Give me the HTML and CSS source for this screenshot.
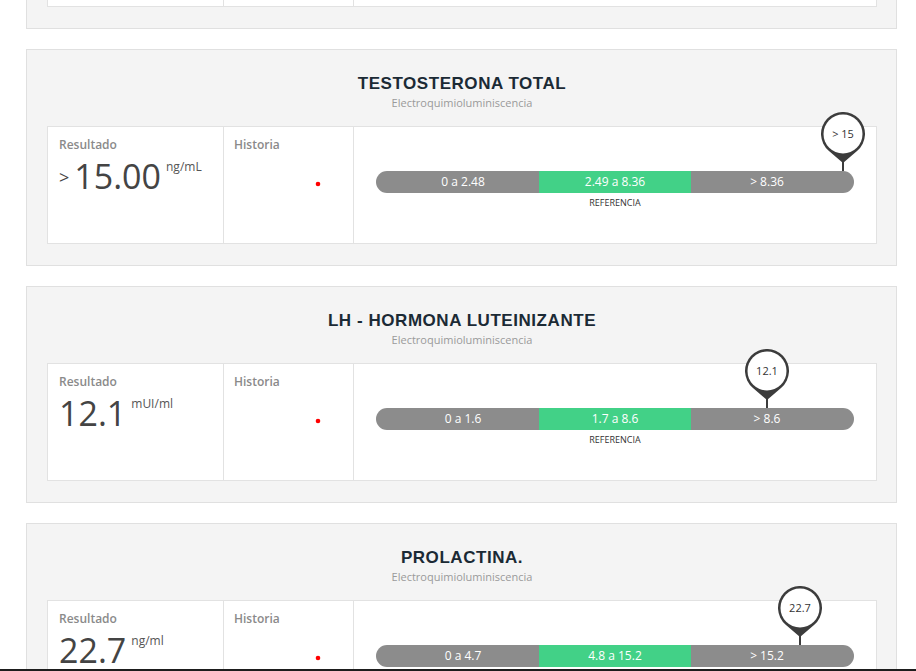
FILE: index.html
```html
<!DOCTYPE html>
<html lang="es">
<head>
    <meta charset="UTF-8">
    <meta name="viewport" content="width=device-width, initial-scale=1.0">
    <title>Resultados de laboratorio</title>
    <link rel="stylesheet" href="styles.css">
</head>
<body>
    <div class="results">

        <!-- FSH -->
        <section class="exam">
            <h2 class="exam-title">FSH - HORMONA FOLICULO ESTIMULANTE</h2>
            <p class="exam-method">Electroquimioluminiscencia</p>
            <div class="exam-table">
                <div class="cell cell-result">
                    <span class="label">Resultado</span>
                    <div class="value"><span class="number">6.3</span><span class="unit">mUI/ml</span></div>
                </div>
                <div class="cell cell-history">
                    <span class="label">Historia</span>
                </div>
                <div class="cell cell-scale"></div>
            </div>
        </section>

        <!-- Testosterona -->
        <section class="exam">
            <h2 class="exam-title">TESTOSTERONA TOTAL</h2>
            <p class="exam-method">Electroquimioluminiscencia</p>
            <div class="exam-table">
                <div class="cell cell-result">
                    <span class="label">Resultado</span>
                    <div class="value"><span class="sign">&gt;</span><span class="number">15.00</span><span class="unit">ng/mL</span></div>
                </div>
                <div class="cell cell-history">
                    <span class="label">Historia</span>
                    <svg class="history-chart" width="108" height="64" viewBox="0 0 108 64">
                        <circle cx="84" cy="32" r="2.3" fill="#ff0000"/>
                    </svg>
                </div>
                <div class="cell cell-scale">
                    <div class="scale">
                        <div class="pin" style="left: 97.7%">
                            <svg width="44" height="59" viewBox="0 0 44 59">
                                <path d="M22 51 L7.7 38.7 A22 22 0 1 1 36.3 38.7 Z" fill="#3c3c3c"/>
                                <circle cx="22" cy="22" r="19.5" fill="#fff"/>
                                <rect x="21" y="50" width="2" height="9" fill="#3c3c3c"/>
                            </svg>
                            <span class="pin-value">&gt; 15</span>
                        </div>
                        <div class="scale-bar">
                            <span class="range">0 a 2.48</span>
                            <span class="range range-ok">2.49 a 8.36</span>
                            <span class="range">&gt; 8.36</span>
                        </div>
                    </div>
                    <div class="scale-caption"><span></span><span>REFERENCIA</span><span></span></div>
                </div>
            </div>
        </section>

        <!-- LH -->
        <section class="exam">
            <h2 class="exam-title">LH - HORMONA LUTEINIZANTE</h2>
            <p class="exam-method">Electroquimioluminiscencia</p>
            <div class="exam-table">
                <div class="cell cell-result">
                    <span class="label">Resultado</span>
                    <div class="value"><span class="number">12.1</span><span class="unit">mUI/ml</span></div>
                </div>
                <div class="cell cell-history">
                    <span class="label">Historia</span>
                    <svg class="history-chart" width="108" height="64" viewBox="0 0 108 64">
                        <circle cx="84" cy="32" r="2.3" fill="#ff0000"/>
                    </svg>
                </div>
                <div class="cell cell-scale">
                    <div class="scale">
                        <div class="pin" style="left: 81.8%">
                            <svg width="44" height="59" viewBox="0 0 44 59">
                                <path d="M22 51 L7.7 38.7 A22 22 0 1 1 36.3 38.7 Z" fill="#3c3c3c"/>
                                <circle cx="22" cy="22" r="19.5" fill="#fff"/>
                                <rect x="21" y="50" width="2" height="9" fill="#3c3c3c"/>
                            </svg>
                            <span class="pin-value">12.1</span>
                        </div>
                        <div class="scale-bar">
                            <span class="range">0 a 1.6</span>
                            <span class="range range-ok">1.7 a 8.6</span>
                            <span class="range">&gt; 8.6</span>
                        </div>
                    </div>
                    <div class="scale-caption"><span></span><span>REFERENCIA</span><span></span></div>
                </div>
            </div>
        </section>

        <!-- Prolactina -->
        <section class="exam">
            <h2 class="exam-title">PROLACTINA.</h2>
            <p class="exam-method">Electroquimioluminiscencia</p>
            <div class="exam-table">
                <div class="cell cell-result">
                    <span class="label">Resultado</span>
                    <div class="value"><span class="number">22.7</span><span class="unit">ng/ml</span></div>
                </div>
                <div class="cell cell-history">
                    <span class="label">Historia</span>
                    <svg class="history-chart" width="108" height="64" viewBox="0 0 108 64">
                        <circle cx="84" cy="32" r="2.3" fill="#ff0000"/>
                    </svg>
                </div>
                <div class="cell cell-scale">
                    <div class="scale">
                        <div class="pin" style="left: 88.7%">
                            <svg width="44" height="59" viewBox="0 0 44 59">
                                <path d="M22 51 L7.7 38.7 A22 22 0 1 1 36.3 38.7 Z" fill="#3c3c3c"/>
                                <circle cx="22" cy="22" r="19.5" fill="#fff"/>
                                <rect x="21" y="50" width="2" height="9" fill="#3c3c3c"/>
                            </svg>
                            <span class="pin-value">22.7</span>
                        </div>
                        <div class="scale-bar">
                            <span class="range">0 a 4.7</span>
                            <span class="range range-ok">4.8 a 15.2</span>
                            <span class="range">&gt; 15.2</span>
                        </div>
                    </div>
                    <div class="scale-caption"><span></span><span>REFERENCIA</span><span></span></div>
                </div>
            </div>
        </section>

    </div>
    <div class="taskbar"></div>
</body>
</html>
```

FILE: styles.css
```css
/* Global Styles */
body {
    margin: 0;
    background-color: #fff;
    font-family: 'Open Sans', sans-serif;
    color: #444;
    overflow: hidden;
}

.results {
    margin-top: -188px;
    padding-left: 26px;
    width: 871px;
}

/* Exam card */
.exam {
    box-sizing: border-box;
    height: 217px;
    margin-bottom: 20px;
    padding: 24px 19px 21px 20px;
    background-color: #f4f4f4;
    border: 1px solid #e0e0e0;
}

.exam-title {
    margin: 0;
    font-family: 'Liberation Sans', Arial, sans-serif;
    font-size: 17px;
    line-height: 20px;
    font-weight: bold;
    letter-spacing: 0.55px;
    text-align: center;
    color: #1b2a35;
}

.exam-method {
    margin: 1px 0 0;
    font-size: 11px;
    line-height: 16px;
    text-align: center;
    color: #9a9a9a;
}

.exam-table {
    box-sizing: border-box;
    height: 118px;
    margin-top: 15px;
    display: grid;
    grid-template-columns: 175px 130px 1fr;
    background-color: #fff;
    border: 1px solid #e2e2e2;
}

.cell {
    padding: 10px 11px 0;
}

.cell + .cell {
    border-left: 1px solid #e2e2e2;
}

.label {
    display: block;
    font-size: 12px;
    line-height: 16px;
    font-weight: 600;
    color: #8a8a8a;
}

/* Result value */
.value {
    display: flex;
    align-items: flex-start;
    margin-top: 3px;
}

.sign {
    font-size: 18px;
    line-height: 24px;
    margin-top: 9px;
    margin-right: 5px;
    color: #444;
}

.number {
    font-size: 34px;
    line-height: 40px;
    color: #444;
}

.unit {
    margin-left: 5px;
    margin-top: 3px;
    font-size: 12px;
    line-height: 16px;
    color: #555;
}

/* History */
.cell-history {
    padding-left: 10px;
}

.history-chart {
    display: block;
    margin-top: -1px;
}

/* Reference scale */
.cell-scale {
    padding: 44px 22px 0;
}

.scale {
    position: relative;
}

.scale-bar,
.scale-caption {
    display: grid;
    grid-template-columns: 1fr 1fr 1fr;
    padding: 0 11px;
}

.scale-bar {
    height: 22px;
    border-radius: 11px;
    background-color: #8c8c8c;
}

.range {
    font-size: 12px;
    line-height: 22px;
    text-align: center;
    color: #fff;
}

.range-ok {
    background-color: #42d187;
}

.scale-caption {
    margin-top: 4px;
    font-size: 9px;
    line-height: 12px;
    text-align: center;
    color: #333;
}

/* Value pin */
.pin {
    position: absolute;
    bottom: 100%;
    width: 44px;
    height: 59px;
    transform: translateX(-50%);
}

.pin svg {
    display: block;
}

.pin-value {
    position: absolute;
    top: 14px;
    left: 0;
    width: 44px;
    font-size: 11px;
    line-height: 16px;
    text-align: center;
    color: #333;
}

.taskbar {
    position: fixed;
    left: 0;
    right: 0;
    bottom: 0;
    height: 2px;
    background-color: #1d1d1d;
}
```
